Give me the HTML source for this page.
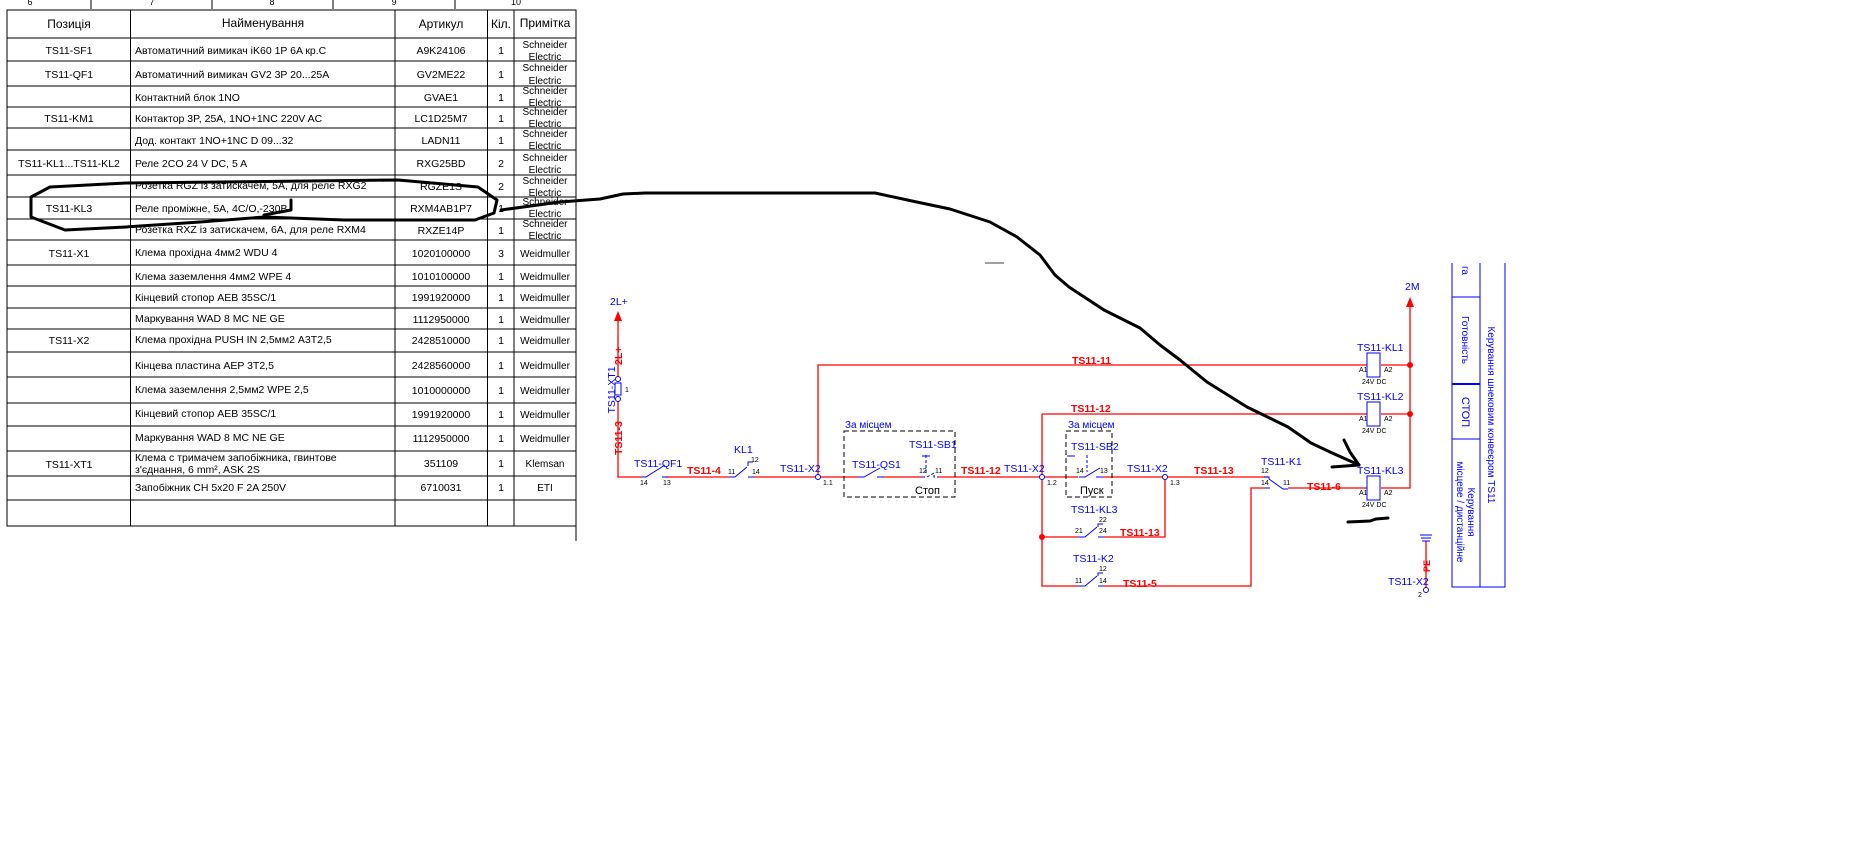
<!DOCTYPE html>
<html><head><meta charset="utf-8"><style>
html,body{margin:0;padding:0;background:#fff;}
body{width:1851px;height:867px;overflow:hidden;position:relative;font-family:"Liberation Sans",sans-serif;}
svg{position:absolute;left:0;top:0;}
</style></head><body>
<svg width="1851" height="867" viewBox="0 0 1851 867" xmlns="http://www.w3.org/2000/svg" font-family="Liberation Sans, DejaVu Sans, sans-serif">
<g stroke="#000" stroke-width="1">
<line x1="91" y1="0" x2="91" y2="9"/><line x1="212" y1="0" x2="212" y2="9"/><line x1="333" y1="0" x2="333" y2="9"/><line x1="455" y1="0" x2="455" y2="9"/>
</g>
<g font-size="9" text-anchor="middle" fill="#000">
<text x="30" y="5">6</text><text x="152" y="5">7</text><text x="272" y="5">8</text><text x="394" y="5">9</text><text x="516" y="5">10</text>
</g>
<g stroke="#000" stroke-width="1" fill="none">
<rect x="7" y="10" width="569" height="516"/>
<line x1="130.5" y1="10" x2="130.5" y2="526"/>
<line x1="395" y1="10" x2="395" y2="526"/>
<line x1="487.5" y1="10" x2="487.5" y2="526"/>
<line x1="514" y1="10" x2="514" y2="526"/>
<line x1="576" y1="526" x2="576" y2="541"/>
<path d="M7 38H576M7 61H576M7 86H576M7 107H576M7 128H576M7 150H576M7 175H576M7 197H576M7 219H576M7 240H576M7 265H576M7 286H576M7 308H576M7 329H576M7 352H576M7 377H576M7 403H576M7 426H576M7 451H576M7 476H576M7 500H576"/>
</g>
<g font-size="12" fill="#000" text-anchor="middle">
<text x="69" y="28">Позиція</text><text x="263" y="27">Найменування</text><text x="441" y="28">Артикул</text><text x="501" y="28">Кіл.</text><text x="545" y="27">Примітка</text>
</g>
<g font-size="10.5" fill="#000">
<g text-anchor="middle">
<text x="69" y="54">TS11-SF1</text><text x="69" y="78">TS11-QF1</text><text x="69" y="122">TS11-KM1</text><text x="69" y="167">TS11-KL1...TS11-KL2</text><text x="69" y="212">TS11-KL3</text><text x="69" y="257">TS11-X1</text><text x="69" y="344">TS11-X2</text><text x="69" y="468">TS11-XT1</text>
<text x="441" y="54">A9K24106</text><text x="441" y="78">GV2ME22</text><text x="441" y="101">GVAE1</text><text x="441" y="122">LC1D25M7</text><text x="441" y="144">LADN11</text><text x="441" y="167">RXG25BD</text><text x="441" y="190">RGZE1S</text><text x="441" y="212">RXM4AB1P7</text><text x="441" y="234">RXZE14P</text><text x="441" y="257">1020100000</text><text x="441" y="280">1010100000</text><text x="441" y="301">1991920000</text><text x="441" y="323">1112950000</text><text x="441" y="344">2428510000</text><text x="441" y="369">2428560000</text><text x="441" y="394">1010000000</text><text x="441" y="418">1991920000</text><text x="441" y="442">1112950000</text><text x="441" y="467">351109</text><text x="441" y="491">6710031</text>
<text x="501" y="54">1</text><text x="501" y="78">1</text><text x="501" y="101">1</text><text x="501" y="122">1</text><text x="501" y="144">1</text><text x="501" y="167">2</text><text x="501" y="190">2</text><text x="501" y="212">1</text><text x="501" y="234">1</text><text x="501" y="257">3</text><text x="501" y="280">1</text><text x="501" y="301">1</text><text x="501" y="323">1</text><text x="501" y="344">1</text><text x="501" y="369">1</text><text x="501" y="394">1</text><text x="501" y="418">1</text><text x="501" y="442">1</text><text x="501" y="467">1</text><text x="501" y="491">1</text>
</g>
<g text-anchor="middle" font-size="10">
<text x="545" y="48">Schneider</text><text x="545" y="60">Electric</text>
<text x="545" y="71">Schneider</text><text x="545" y="84">Electric</text>
<text x="545" y="94">Schneider</text><text x="545" y="106">Electric</text>
<text x="545" y="115">Schneider</text><text x="545" y="127">Electric</text>
<text x="545" y="137">Schneider</text><text x="545" y="149">Electric</text>
<text x="545" y="161">Schneider</text><text x="545" y="173">Electric</text>
<text x="545" y="184">Schneider</text><text x="545" y="196">Electric</text>
<text x="545" y="205">Schneider</text><text x="545" y="217">Electric</text>
<text x="545" y="227">Schneider</text><text x="545" y="239">Electric</text>
<text x="545" y="257">Weidmuller</text><text x="545" y="280">Weidmuller</text><text x="545" y="301">Weidmuller</text><text x="545" y="323">Weidmuller</text><text x="545" y="344">Weidmuller</text><text x="545" y="369">Weidmuller</text><text x="545" y="394">Weidmuller</text><text x="545" y="418">Weidmuller</text><text x="545" y="442">Weidmuller</text><text x="545" y="467">Klemsan</text><text x="545" y="491">ETI</text>
</g>
<g>
<text x="135" y="54">Автоматичний вимикач iK60 1P 6A кр.C</text>
<text x="135" y="78">Автоматичний вимикач GV2 3P  20...25A</text>
<text x="135" y="101">Контактний блок 1NO</text>
<text x="135" y="122">Контактор 3P, 25A, 1NO+1NC 220V AC</text>
<text x="135" y="144">Дод. контакт 1NO+1NC D 09...32</text>
<text x="135" y="167">Реле 2CO 24 V DC, 5 A</text>
<text x="135" y="189">Розетка RGZ із затискачем, 5A, для реле RXG2</text>
<text x="135" y="212">Реле проміжне, 5A, 4C/O,-230В</text>
<text x="135" y="233">Розетка RXZ із затискачем, 6A, для реле RXM4</text>
<text x="135" y="256">Клема прохідна 4мм2 WDU 4</text>
<text x="135" y="280">Клема заземлення 4мм2 WPE 4</text>
<text x="135" y="301">Кінцевий стопор AEB 35SC/1</text>
<text x="135" y="322">Маркування WAD 8 MC NE GE</text>
<text x="135" y="343">Клема прохідна PUSH IN 2,5мм2 A3T2,5</text>
<text x="135" y="369">Кінцева пластина AEP 3T2,5</text>
<text x="135" y="393">Клема заземлення 2,5мм2 WPE 2,5</text>
<text x="135" y="417">Кінцевий стопор AEB 35SC/1</text>
<text x="135" y="441">Маркування WAD 8 MC NE GE</text>
<text x="135" y="461">Клема с тримачем запобіжника, гвинтове</text>
<text x="135" y="473">з'єднання, 6 mm², ASK 2S</text>
<text x="135" y="491">Запобіжник CH 5x20 F 2A 250V</text>
</g>
</g>

<g stroke="#f00" stroke-width="1.3" fill="none">
<path d="M618 316V377M618 399V477H642M666 477H729M754 477H818"/>
<path d="M818 477V365H1367"/>
<path d="M821 477H858M882 477H922M939 477H1042"/>
<path d="M1042 414H1367M1042 414V586H1078M1104 586H1251V488H1264M1288 488H1367"/>
<path d="M1045 477H1078M1103 477H1165H1268"/>
<path d="M1165 480V537H1104M1078 537H1042"/>
<path d="M1381 365H1410M1381 414H1410M1381 488H1410V300"/>
<path d="M1426 541V588"/>
</g>
<polygon points="618,311 614,321 622,321" fill="#f00"/>
<polygon points="1410,297 1406,307 1414,307" fill="#f00"/>
<g fill="#f00"><circle cx="1042" cy="537" r="3"/><circle cx="1410" cy="365" r="3"/><circle cx="1410" cy="414" r="3"/></g>

<g stroke="#00f" stroke-width="1" fill="#fff">
<rect x="615" y="383" width="6" height="12"/>
<circle cx="618" cy="379" r="2.5"/><circle cx="618" cy="399" r="2.5"/>
<circle cx="818" cy="477" r="2.5"/><circle cx="1042" cy="477" r="2.5"/><circle cx="1165" cy="477" r="2.5"/>
<circle cx="1426" cy="590" r="2.5"/>
<rect x="1367" y="353" width="13" height="24"/><rect x="1367" y="402" width="13" height="24"/><rect x="1367" y="476" width="13" height="24"/>
</g>
<g stroke="#00f" stroke-width="1" fill="none">
<path d="M642 477h4l19 -12M662 477h6"/>
<path d="M729 477h6l12 -10M748 466v-4h5M748 477h6"/>
<path d="M858 477h6l16 -9M877 477h6"/>
<path d="M922 477h5l7 -4v4h5M926 455v18" stroke-dasharray="3,2"/>
<path d="M922 456h8M1067 456h8"/>
<path d="M1079 477h6l15 -9M1096 477h7"/>
<path d="M1078 537h7l12 -10M1098 527v-3h5M1098 537h6"/>
<path d="M1078 586h7l12 -10M1098 576v-3h5M1098 586h6"/>
<path d="M1264 477h5v2l14 10h5M1264 488h6"/>
<path d="M1420 535h12M1421 538h10M1422 541h8"/>
<path d="M1452 263V587H1505V263M1480 263V587M1452 297H1480M1452 439H1480"/>
<path d="M1452 384H1480" stroke-width="2"/>
</g>
<g stroke="#000" stroke-width="1" fill="none" stroke-dasharray="5,3">
<rect x="844" y="431" width="111" height="66"/>
<rect x="1066" y="431" width="46" height="66"/>
</g>
<g stroke="#00f" stroke-dasharray="3,2"><line x1="1087" y1="455" x2="1087" y2="472"/></g>

<g fill="#00f" font-size="10.5">
<text x="610" y="305">2L+</text>
<text x="1405" y="290">2M</text>
<text x="634" y="467">TS11-QF1</text>
<text x="734" y="453">KL1</text>
<text x="780" y="472">TS11-X2</text>
<text x="845" y="428" font-size="10">За місцем</text>
<text x="852" y="468">TS11-QS1</text>
<text x="909" y="448">TS11-SB1</text>
<text x="1004" y="472">TS11-X2</text>
<text x="1068" y="428" font-size="10">За місцем</text>
<text x="1071" y="450">TS11-SB2</text>
<text x="1127" y="472">TS11-X2</text>
<text x="1071" y="513">TS11-KL3</text>
<text x="1073" y="562">TS11-K2</text>
<text x="1261" y="465">TS11-K1</text>
<text x="1357" y="351">TS11-KL1</text>
<text x="1357" y="400">TS11-KL2</text>
<text x="1357" y="474">TS11-KL3</text>
<text x="1388" y="585">TS11-X2</text>
<text transform="translate(615,390) rotate(-90)" text-anchor="middle">TS11-XT1</text>
</g>
<g fill="#00f" font-size="10">
<text transform="translate(1462,266) rotate(90)">га</text>
<text transform="translate(1462,340) rotate(90)" text-anchor="middle">Готовність</text>
<text transform="translate(1462,412) rotate(90)" text-anchor="middle" font-size="11">СТОП</text>
<text transform="translate(1468,512) rotate(90)" text-anchor="middle">Керування</text>
<text transform="translate(1457,512) rotate(90)" text-anchor="middle">місцеве / дистанційне</text>
<text transform="translate(1488,415) rotate(90)" text-anchor="middle">Керування шнековим конвеєром TS11</text>
</g>
<g fill="#000" font-size="7">
<text x="640" y="485">14</text><text x="663" y="485">13</text>
<text x="728" y="474">11</text><text x="751" y="462">12</text><text x="752" y="474">14</text>
<text x="823" y="485">1.1</text><text x="1047" y="485">1.2</text><text x="1170" y="485">1.3</text>
<text x="919" y="473">12</text><text x="935" y="473">11</text>
<text x="1076" y="473">14</text><text x="1100" y="473">13</text>
<text x="1075" y="533">21</text><text x="1099" y="522">22</text><text x="1099" y="533">24</text>
<text x="1075" y="583">11</text><text x="1099" y="571">12</text><text x="1099" y="583">14</text>
<text x="1261" y="473">12</text><text x="1261" y="485">14</text><text x="1283" y="485">11</text>
<text x="1359" y="372">A1</text><text x="1384" y="372">A2</text><text x="1362" y="384">24V DC</text>
<text x="1359" y="421">A1</text><text x="1384" y="421">A2</text><text x="1362" y="433">24V DC</text>
<text x="1359" y="495">A1</text><text x="1384" y="495">A2</text><text x="1362" y="507">24V DC</text>
<text x="625" y="392">1</text><text x="1418" y="597">2</text>
</g>
<g fill="#000" font-size="11"><text x="915" y="494">Стоп</text><text x="1080" y="494">Пуск</text></g>
<g fill="#f00" font-size="10.5" font-weight="bold">
<text x="687" y="474">TS11-4</text>
<text x="961" y="474">TS11-12</text>
<text x="1072" y="364">TS11-11</text>
<text x="1071" y="412">TS11-12</text>
<text x="1194" y="474">TS11-13</text>
<text x="1120" y="536">TS11-13</text>
<text x="1123" y="587">TS11-5</text>
<text x="1307" y="490">TS11-6</text>
<text transform="translate(622,365) rotate(-90)">2L+</text>
<text transform="translate(622,455) rotate(-90)">TS11-3</text>
<text transform="translate(1430,572) rotate(-90)" font-size="9">PE</text>
</g>
<g stroke="#000" stroke-width="3" fill="none" stroke-linecap="round" stroke-linejoin="round">
<path d="M126 183L398 180L478 187L497 200L494 213L475 220L344 220L264 217L200 222L126 227L65 230L31 217L31 197L50 187Z"/>
<path d="M291 200V210L264 215"/>
<path d="M501 210L560 202L600 199L623 194L645 193L875 193L912 201L950 209L990 222L1017 237L1040 255L1055 275L1069 287L1104 310L1140 328L1160 345L1180 360L1207 382L1247 407L1288 427L1311 443L1330 452L1359 465"/>
<path d="M1344 440L1350 452L1359 465M1332 467L1359 465"/>
<path d="M1348 522L1370 521L1376 519L1388 518"/>
</g>
<line x1="985" y1="263" x2="1004" y2="263" stroke="#444" stroke-width="1"/>
</svg>
</body></html>
